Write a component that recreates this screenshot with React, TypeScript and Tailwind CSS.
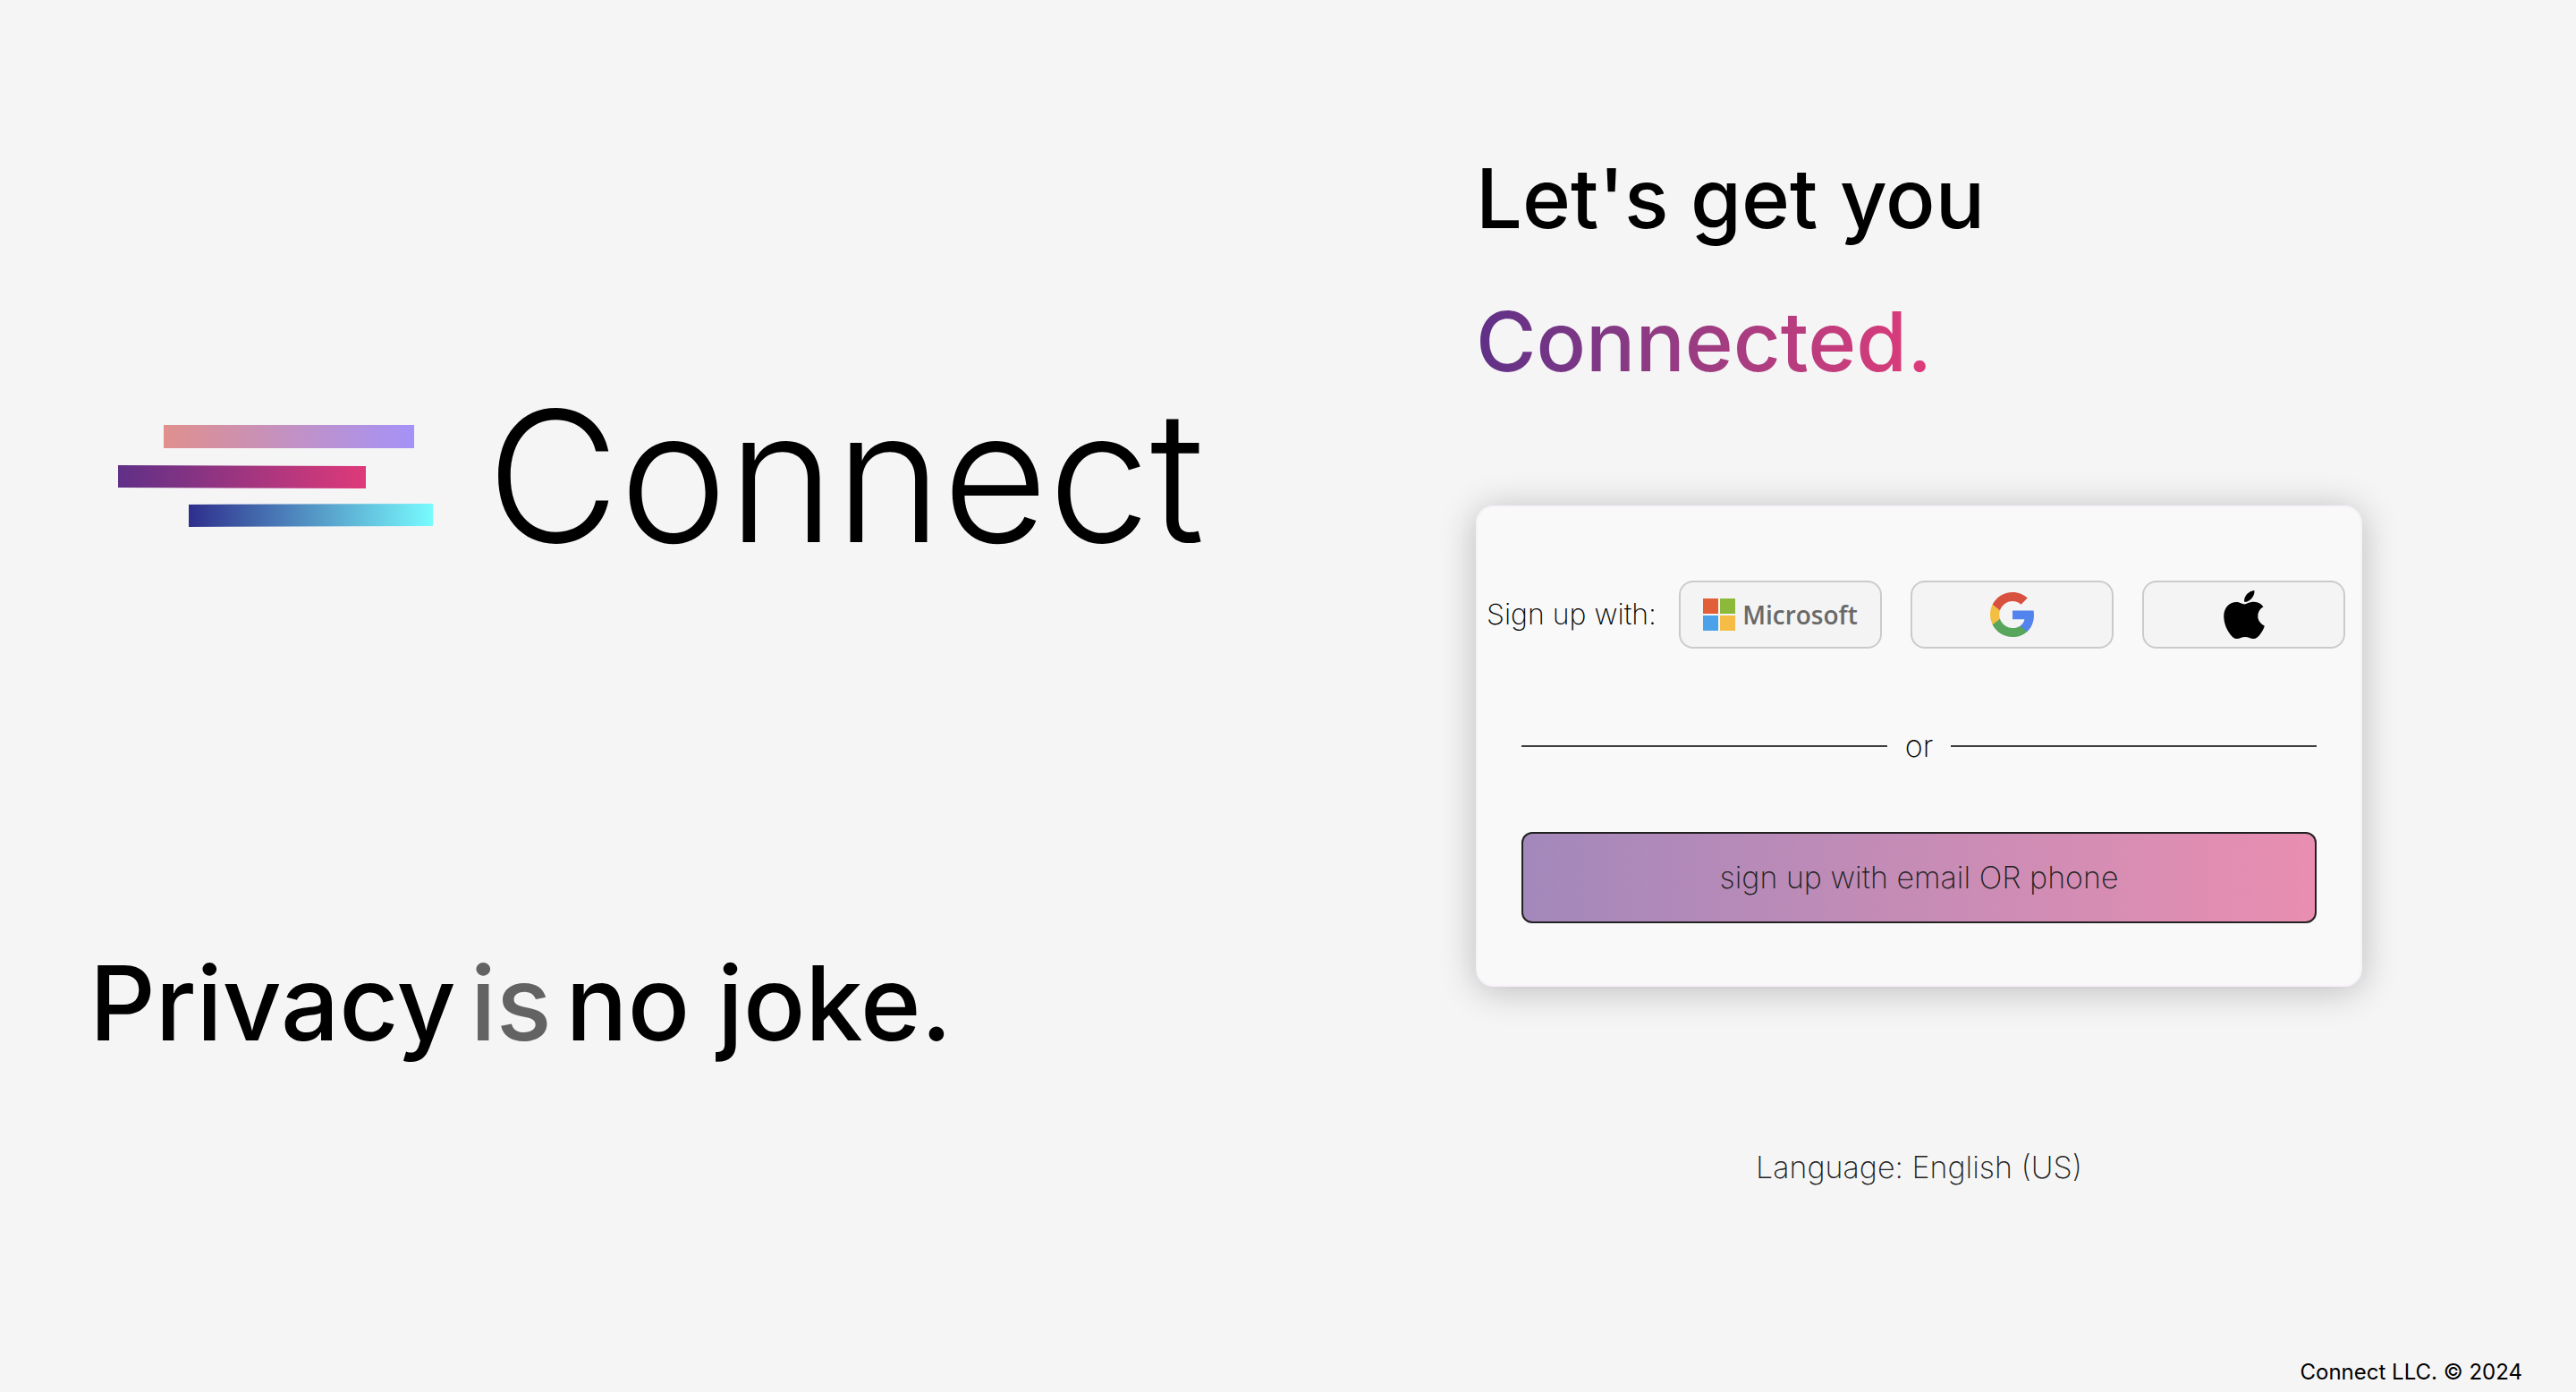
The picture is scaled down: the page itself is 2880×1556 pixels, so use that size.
import React from "react";
import { FaApple } from "react-icons/fa";

function LogoMark() {
  return (
    <svg viewBox="0 0 352 114" className="h-[114px] w-[352px] shrink-0" aria-hidden="true">
      <defs>
        <linearGradient id="bar-top">
          <stop offset="0" stopColor="#e0908d" />
          <stop offset="1" stopColor="#a592f8" />
        </linearGradient>
        <linearGradient id="bar-middle">
          <stop offset="0" stopColor="#5f3087" />
          <stop offset="1" stopColor="#de3a79" />
        </linearGradient>
        <linearGradient id="bar-bottom">
          <stop offset="0" stopColor="#2e2e8c" />
          <stop offset="1" stopColor="#78fbfe" />
        </linearGradient>
      </defs>
      <path d="M51 0H331V26H51Z" fill="url(#bar-top)" />
      <path d="M0 45L277 46V71L0 70Z" fill="url(#bar-middle)" />
      <path d="M79 89L352 88V113L79 114Z" fill="url(#bar-bottom)" />
    </svg>
  );
}

function GoogleLogo() {
  return (
    <svg viewBox="1 1 21.56 22" className="h-[50px] w-[49px]" aria-hidden="true">
      <path fill="#5383ec" d="M22.56 12.25c0-.78-.07-1.53-.2-2.25H12v4.26h5.92c-.26 1.37-1.04 2.53-2.21 3.31v2.77h3.57c2.08-1.92 3.28-4.74 3.28-8.09z" />
      <path fill="#58a55c" d="M12 23c2.97 0 5.46-.98 7.28-2.66l-3.57-2.77c-.98.66-2.23 1.06-3.71 1.06-2.86 0-5.29-1.93-6.16-4.53H2.18v2.84C3.99 20.53 7.7 23 12 23z" />
      <path fill="#f3be42" d="M5.84 14.09c-.22-.66-.35-1.36-.35-2.09s.13-1.43.35-2.09V7.07H2.18C1.43 8.55 1 10.22 1 12s.43 3.45 1.18 4.93l2.85-2.22.81-.62z" />
      <path fill="#d85140" d="M12 5.38c1.62 0 3.06.56 4.21 1.64l3.15-3.15C17.45 2.09 14.97 1 12 1 7.7 1 3.99 3.47 2.18 7.07l3.66 2.84c.87-2.6 3.3-4.53 6.16-4.53z" />
    </svg>
  );
}

function MicrosoftLogo() {
  return (
    <>
      <svg viewBox="0 0 36 36" className="h-9 w-9 shrink-0" aria-hidden="true">
        <path fill="#e15e39" d="M0 0h17v17H0z" />
        <path fill="#8cb93a" d="M19 0h17v17H19z" />
        <path fill="#4ca2ea" d="M0 19h17v17H0z" />
        <path fill="#f5bd46" d="M19 19h17v17H19z" />
      </svg>
      <span className="font-['Open_Sans',sans-serif] text-[28px] leading-9 font-semibold text-[#696969]">Microsoft</span>
    </>
  );
}

function ProviderButton({ label, children }: { label: string; children: React.ReactNode }) {
  return (
    <button
      type="button"
      aria-label={label}
      className="flex h-[76px] flex-1 items-center justify-center gap-2 rounded-2xl border-2 border-[#cbcbcb] bg-[#f4f4f4]"
    >
      {children}
    </button>
  );
}

export default function App() {
  return (
    <div className="flex min-h-screen flex-col bg-[#f5f5f5] font-['Inter',sans-serif] text-black">
      <main className="grid flex-1 grid-cols-[1650fr_1230fr] items-start">
        <section className="px-[100px] pt-[424px]">
          <div className="flex items-center gap-[60px] pl-8">
            <LogoMark />
            <span className="text-[204px] leading-[216px] font-[350]">Connect</span>
          </div>
          <p className="mt-[418px] flex gap-4 text-[115px] leading-[128px] font-medium">
            <span>Privacy</span>
            <span className="text-[#636363]">is</span>
            <span>no joke.</span>
          </p>
        </section>

        <section className="max-w-[991px] pt-[142px]">
          <h1 className="text-[92px] leading-[160px] font-medium">
            Let's get you
            <br />
            <span className="bg-linear-to-r from-[#5f3087] to-[#e03a78] bg-clip-text text-transparent">Connected.</span>
          </h1>

          <div className="mt-[103px] rounded-[20px] border-2 border-[#f7f1f9] bg-[#f9f9f9] pt-[82px] pb-[69px] shadow-[0_4px_40px_rgba(0,0,0,0.24)]">
            <div className="flex items-center gap-8 pr-[17px] pl-[10px]">
              <span className="-mr-1 w-[187px] shrink-0 text-[32px] leading-10 font-extralight whitespace-nowrap">Sign up with:</span>
              <ProviderButton label="Microsoft">
                <MicrosoftLogo />
              </ProviderButton>
              <ProviderButton label="Google">
                <GoogleLogo />
              </ProviderButton>
              <ProviderButton label="Apple">
                <FaApple className="h-[62px] w-[62px]" />
              </ProviderButton>
            </div>

            <div className="mt-[89px] flex items-center gap-5 px-[49px]">
              <span className="h-[2px] flex-1 bg-[#3f3f3f]" />
              <span className="text-[34px] leading-10 font-extralight">or</span>
              <span className="h-[2px] flex-1 bg-[#3f3f3f]" />
            </div>

            <div className="mt-[76px] px-[49px]">
              <button
                type="button"
                className="h-[102px] w-full rounded-xl border-2 border-[#222222] bg-linear-to-r from-[#a388bb] to-[#e98eb0] text-[34px] leading-10 font-extralight text-[#222222]"
              >
                sign up with email OR phone
              </button>
            </div>
          </div>

          <p className="mt-[182px] text-center text-[34px] leading-10 font-extralight text-[#222222]">Language: English (US)</p>
        </section>
      </main>

      <footer className="px-[60px] pb-[6px] text-right text-[24px] leading-8">Connect LLC. © 2024</footer>
    </div>
  );
}
